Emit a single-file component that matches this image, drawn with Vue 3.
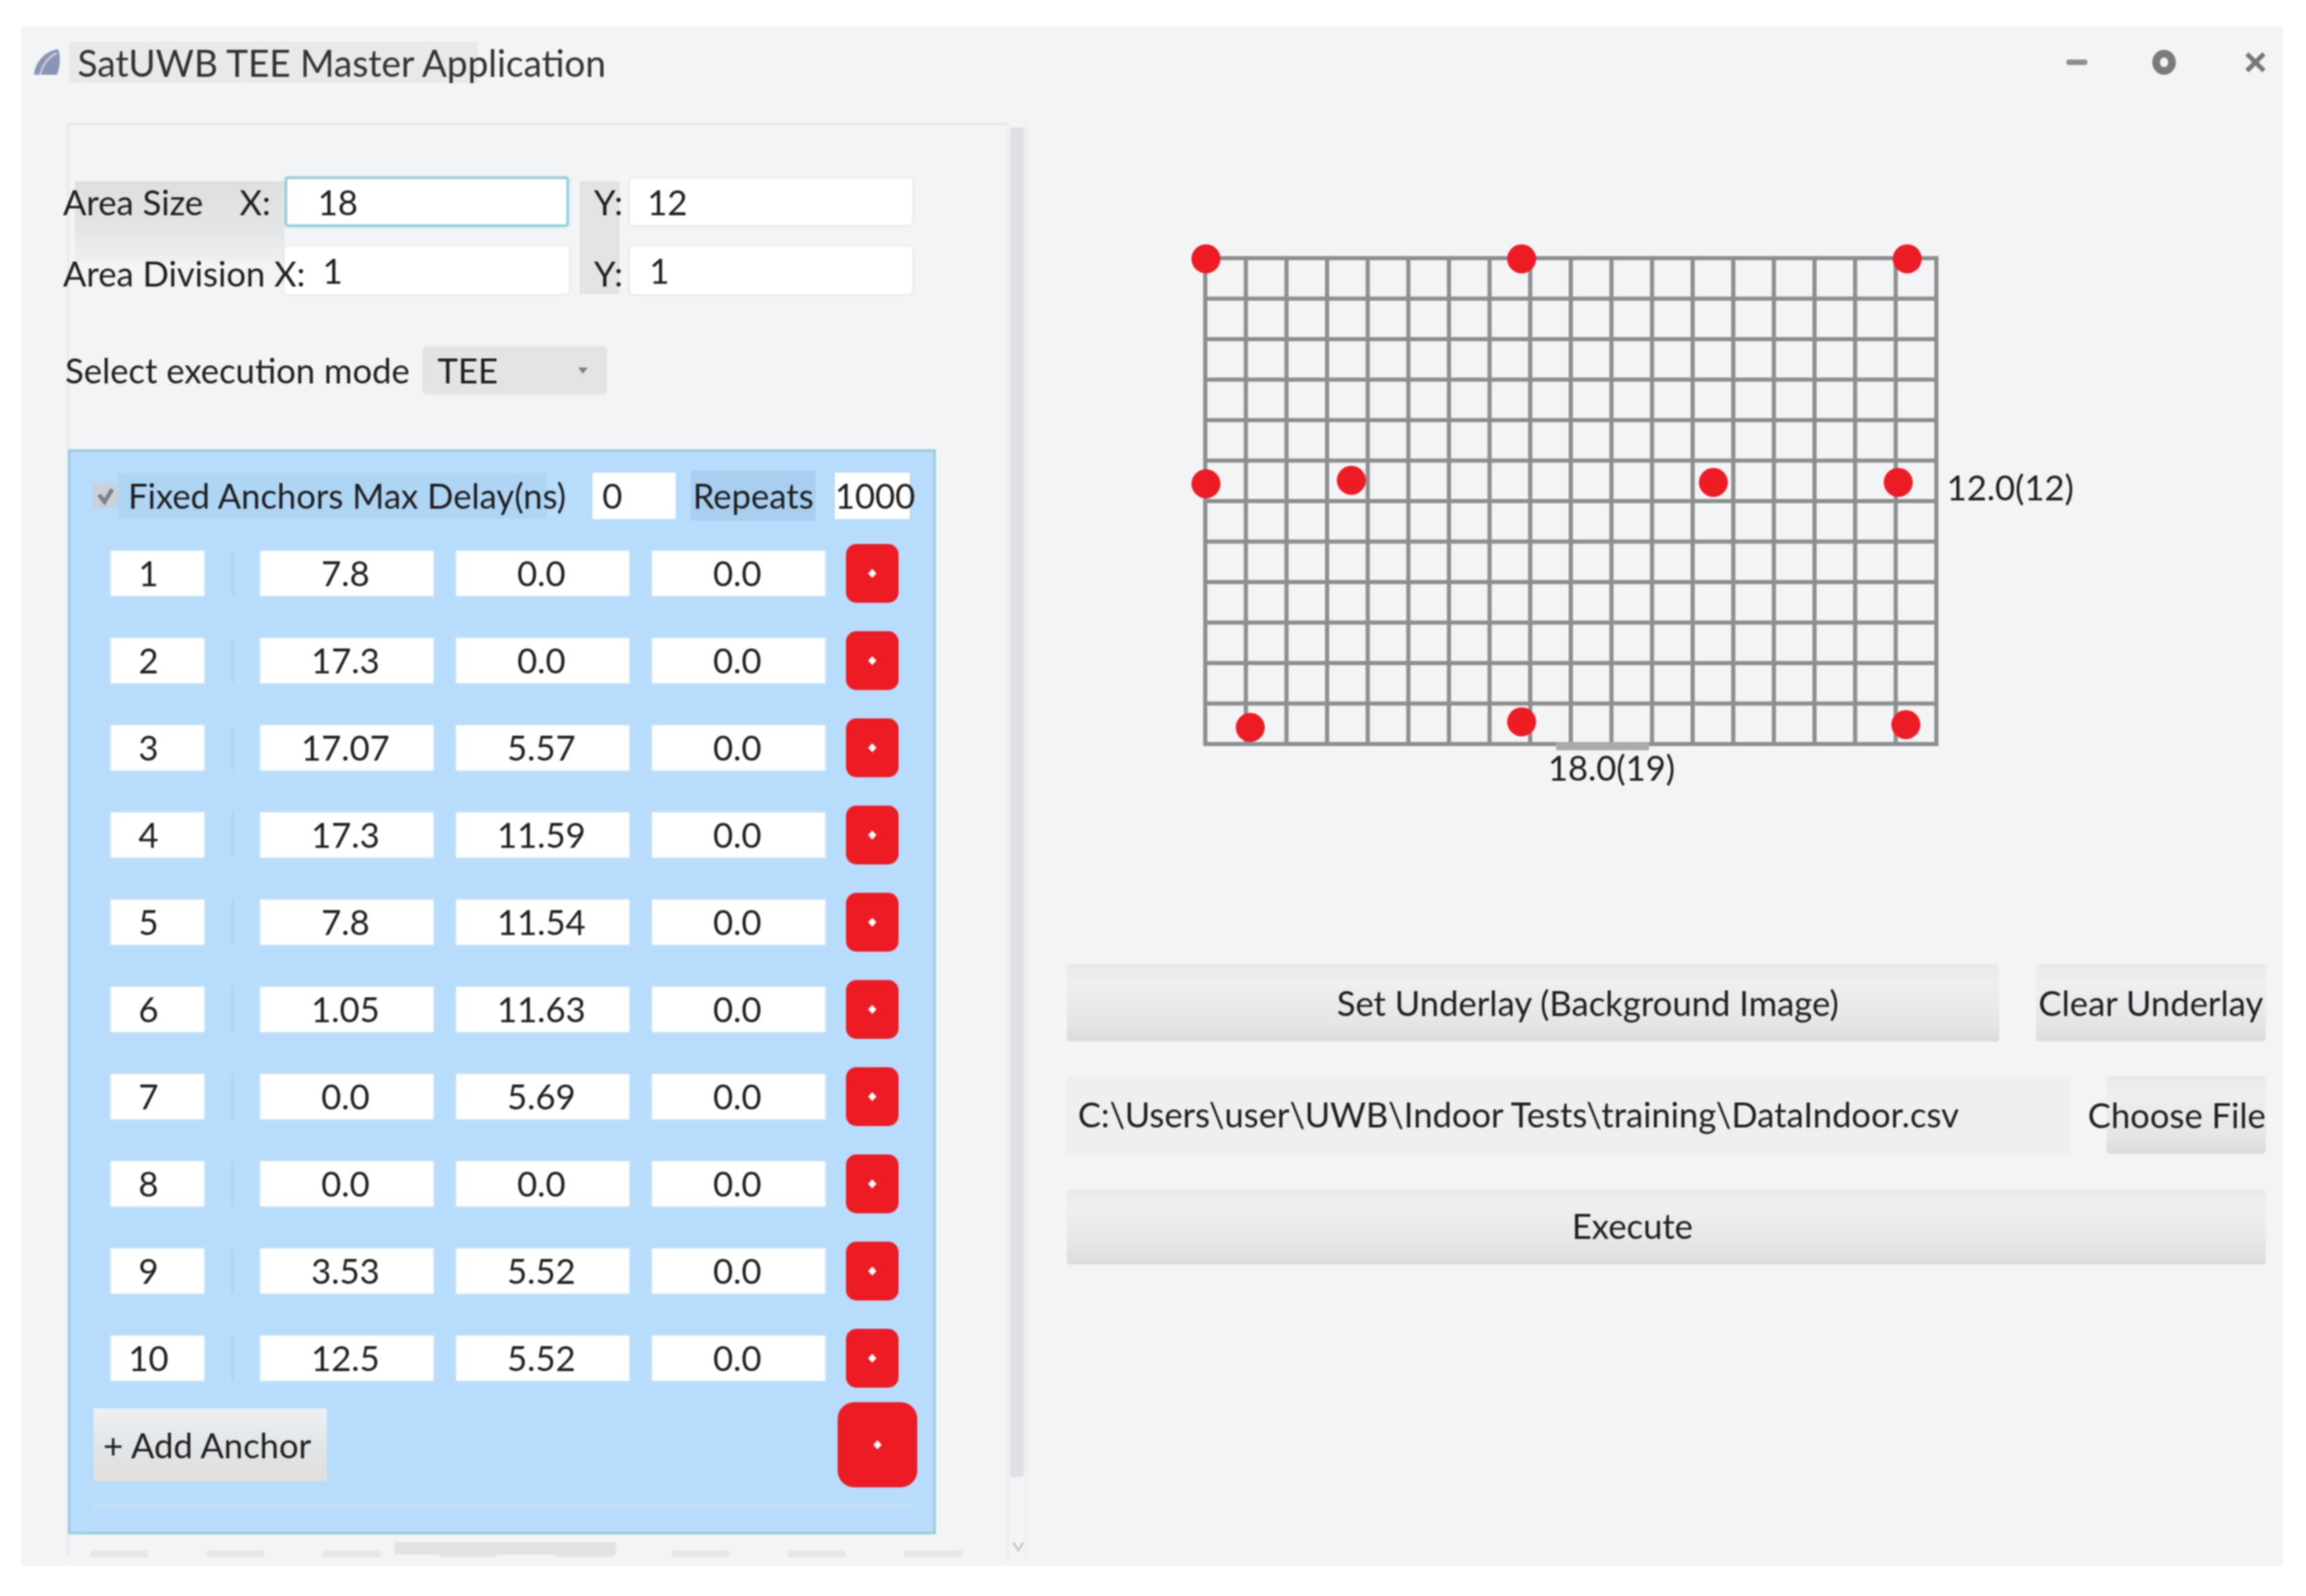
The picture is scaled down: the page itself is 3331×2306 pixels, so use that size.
<script setup>
const anchors = [
  { id: 1, x: '7.8', y: '0.0', z: '0.0' },
  { id: 2, x: '17.3', y: '0.0', z: '0.0' },
  { id: 3, x: '17.07', y: '5.57', z: '0.0' },
  { id: 4, x: '17.3', y: '11.59', z: '0.0' },
  { id: 5, x: '7.8', y: '11.54', z: '0.0' },
  { id: 6, x: '1.05', y: '11.63', z: '0.0' },
  { id: 7, x: '0.0', y: '5.69', z: '0.0' },
  { id: 8, x: '0.0', y: '0.0', z: '0.0' },
  { id: 9, x: '3.53', y: '5.52', z: '0.0' },
  { id: 10, x: '12.5', y: '5.52', z: '0.0' }
]

// plot geometry, in the local coordinates of the svg
const left = 200
const top = 195
const cell = 58.67
const rowH = 58.5
const cols = Array.from({ length: 19 }, (_, i) => left + i * cell)
const rows = Array.from({ length: 13 }, (_, i) => top + i * rowH)
const right = cols[18]
const bottom = rows[12]

const dots = [
  [201, 196], [657, 196], [1214, 196],
  [201, 521], [411, 516], [934, 519], [1201, 519],
  [265, 873], [657, 865], [1212, 869]
]
</script>

<template>
  <div class="window">
    <header class="titlebar">
      <svg class="app-icon" viewBox="0 0 40 40">
        <path d="M1 38C3 20 16 4 36 1c4 12 3 26-2 37z" fill="#8b94b4" />
        <path d="M10 38C13 24 22 12 34 7" stroke="#c9cedd" stroke-width="3" fill="none" />
      </svg>
      <span class="title">SatUWB TEE Master Application</span>
      <div class="controls">
        <span class="ctl-min"></span>
        <span class="ctl-max"></span>
        <svg class="ctl-close" viewBox="0 0 32 32">
          <path d="M3 3l26 26M29 3L3 29" stroke="#777" stroke-width="7" />
        </svg>
      </div>
    </header>

    <div class="content">
      <section class="left-panel">
        <div class="left-main">
          <div class="area-form">
            <div class="lbl lbl-size"><span>Area Size</span><span>X:</span></div>
            <div class="field field-focus">18</div>
            <div class="lbl lbl-y lbl-y1">Y:</div>
            <div class="field field-y1">12</div>
            <div class="lbl lbl-div">Area Division X:</div>
            <div class="field field-div">1</div>
            <div class="lbl lbl-y lbl-y2">Y:</div>
            <div class="field field-y2">1</div>
          </div>

          <div class="mode-row">
            <span class="mode-label">Select execution mode</span>
            <div class="combo">
              <span>TEE</span>
              <i class="combo-arrow"></i>
            </div>
          </div>

          <div class="anchors">
            <div class="anchors-head">
              <svg class="check" viewBox="0 0 36 36">
                <rect width="36" height="36" rx="5" fill="#c9d1d9" />
                <path d="M9 17l8 10 11-18" stroke="#7d7f85" stroke-width="6" fill="none" />
              </svg>
              <span class="head-label">Fixed Anchors Max Delay(ns)</span>
              <div class="delay">0</div>
              <span class="repeats-label">Repeats</span>
              <div class="repeats">1000</div>
            </div>

            <div class="anchor-list">
              <div v-for="a in anchors" :key="a.id" class="anchor-row">
                <div class="cell cell-id">{{ a.id }}</div>
                <div class="sep"></div>
                <div class="cell">{{ a.x }}</div>
                <div class="cell">{{ a.y }}</div>
                <div class="cell">{{ a.z }}</div>
                <button class="red-btn"></button>
              </div>
            </div>

            <div class="anchors-foot">
              <button class="add-btn">+ Add Anchor</button>
              <button class="red-btn red-big"></button>
            </div>
          </div>

          <div class="h-scroll"><span></span></div>
        </div>

        <div class="v-scroll">
          <div class="v-thumb"></div>
          <svg class="v-arrow" viewBox="0 0 20 20">
            <path d="M3 5l7 11 7-11" stroke="#c3c5c9" stroke-width="3" fill="none" />
          </svg>
        </div>
      </section>

      <section class="right">
        <svg class="plot" viewBox="0 0 1732 1215">
          <g stroke="#8d8e90" stroke-width="6">
            <line v-for="x in cols" :key="'c' + x" :x1="x" :x2="x" :y1="top" :y2="bottom" />
            <line v-for="y in rows" :key="'r' + y" :x1="left - 3" :x2="right + 3" :y1="y" :y2="y" />
          </g>
          <rect x="707" y="894" width="134" height="12" fill="#a9aaac" />
          <circle v-for="d in dots" :key="d[0] + '-' + d[1]" :cx="d[0]" :cy="d[1]" r="21" fill="#ed1c24" />
          <text class="plot-text" x="1271" y="545">12.0(12)</text>
          <text class="plot-text" x="695" y="950">18.0(19)</text>
        </svg>

        <div class="action-row action-underlay">
          <button class="btn btn-grow">Set Underlay (Background Image)</button>
          <button class="btn btn-clear">Clear Underlay</button>
        </div>
        <div class="action-row action-file">
          <div class="path">C:\Users\user\UWB\Indoor Tests\training\DataIndoor.csv</div>
          <button class="btn btn-file">Choose File</button>
        </div>
        <button class="btn btn-exec">Execute</button>
      </section>
    </div>
  </div>
</template>

<style>
html,
body {
  background: #ffffff;
}
</style>

<style scoped>
.window {
  box-sizing: border-box;
  width: 3268px;
  height: 2225px;
  margin: 38px 0 0 30px;
  background: #f3f4f6;
  color: #1f1f1f;
  font-family: Lato, "Noto Sans", sans-serif;
  font-size: 50px;
  filter: blur(0.9px);
}

/* title bar */
.titlebar {
  display: flex;
  align-items: center;
  height: 140px;
  padding: 0 25px 36px 18px;
  box-sizing: border-box;
}

.app-icon {
  width: 40px;
  height: 40px;
  flex: none;
}

.title {
  margin-left: 12px;
  padding: 0 12px;
  background: linear-gradient(90deg, #e9e9ea 590px, transparent 590px);
  font-size: 53.4px;
  line-height: 60px;
  color: #333;
  white-space: nowrap;
}

.controls {
  display: flex;
  align-items: center;
  margin-left: auto;
}

.ctl-min {
  width: 30px;
  height: 8px;
  margin-right: 94px;
  background: #8f8f8f;
  border-radius: 3px;
}

.ctl-max {
  box-sizing: border-box;
  width: 34px;
  height: 36px;
  margin-right: 100px;
  border: 11px solid #7b7b7b;
  border-radius: 50%;
}

.ctl-close {
  width: 30px;
  height: 30px;
}

.content {
  display: flex;
  gap: 58px;
  padding: 0 25px 0 67px;
}

/* left panel */
.left-panel {
  display: flex;
  width: 1386px;
  height: 2072px;
  flex: none;
}

.left-main {
  position: relative;
  width: 1358px;
  flex: none;
  border-top: 3px solid #e7e8ea;
  border-left: 3px solid #e7e8ea;
  padding-top: 74px;
  box-sizing: border-box;
}

.area-form {
  display: grid;
  grid-template-columns: 320px 411px 88px 408px;
  grid-template-rows: 73px 69px;
  row-gap: 28px;
  align-items: center;
  margin-left: -9px;
}

.lbl {
  position: relative;
  white-space: nowrap;
  line-height: 60px;
}

.lbl-size {
  display: flex;
  justify-content: space-between;
  padding-right: 20px;
}

/* grey smear behind the first label, runs down towards the second row */
.lbl-size::before {
  content: '';
  position: absolute;
  z-index: -1;
  left: 17px;
  right: 0;
  top: 0;
  bottom: -58px;
  background: linear-gradient(#dedfe0, #e4e5e6 60%, #f0f1f2);
}

.lbl-div {
  z-index: 1;
  padding-top: 8px;
}

.lbl-y {
  padding-left: 36px;
}

.lbl-y::before {
  content: '';
  position: absolute;
  z-index: -1;
  left: 15px;
  width: 58px;
  top: 0;
  bottom: 0;
  background: #e2e4e5;
}

.lbl-y1::before {
  bottom: -40px;
}

.lbl-y2 {
  padding-top: 8px;
}

.field {
  box-sizing: border-box;
  height: 100%;
  display: flex;
  align-items: center;
  background: #fff;
  border-radius: 5px;
  box-shadow: 0 0 4px 1px #e2e3e5;
}

.field-focus {
  padding-left: 44px;
  border: 4px solid #94d2dd;
}

.field-y1 {
  height: 67px;
  padding-left: 25px;
}

.field-y2 {
  padding-left: 28px;
}

.field-div {
  padding-left: 55px;
}

.mode-row {
  display: flex;
  align-items: center;
  height: 70px;
  margin: 75px 0 0 -6px;
}

.mode-label {
  width: 516px;
  white-space: nowrap;
}

.combo {
  display: flex;
  align-items: center;
  justify-content: space-between;
  box-sizing: border-box;
  width: 267px;
  height: 70px;
  padding: 0 28px 0 22px;
  background: #e3e4e5;
  border-radius: 6px;
}

.combo-arrow {
  width: 0;
  height: 0;
  border-left: 7px solid transparent;
  border-right: 7px solid transparent;
  border-top: 9px solid #808080;
}

/* anchors box */
.anchors {
  box-sizing: border-box;
  width: 1254px;
  height: 1568px;
  margin: 79px 0 0 -2px;
  padding: 27px 0 0;
  background: #b7dcfc;
  border: 4px solid #9ccfdc;
}

.anchors-head {
  display: flex;
  align-items: center;
  height: 72px;
  padding-left: 32px;
}

.check {
  width: 36px;
  height: 36px;
  flex: none;
}

.head-label {
  width: 686px;
  padding-left: 15px;
  box-sizing: border-box;
  line-height: 66px;
  background: linear-gradient(90deg, #afd5f5 620px, transparent 620px);
  white-space: nowrap;
}

.delay {
  box-sizing: border-box;
  width: 120px;
  height: 67px;
  padding-left: 14px;
  line-height: 67px;
  background: #fff;
}

.repeats-label {
  width: 180px;
  margin-left: 22px;
  line-height: 72px;
  text-align: center;
  background: #a8cff0;
}

.repeats {
  width: 108px;
  margin-left: 28px;
  line-height: 67px;
  text-align: center;
  background: #fff;
}

.anchor-list {
  display: flex;
  flex-direction: column;
  gap: 41px;
  margin-top: 34px;
  padding-left: 58px;
}

.anchor-row {
  display: flex;
  align-items: center;
  height: 85px;
}

.cell {
  box-sizing: border-box;
  width: 250px;
  height: 65px;
  margin-right: 33px;
  padding-right: 4px;
  line-height: 65px;
  text-align: center;
  background: #fff;
  box-shadow: 0 0 4px 1px #d3e7f7;
}

.cell-id {
  width: 135px;
  margin-right: 0;
  padding-right: 26px;
}

.sep {
  width: 4px;
  height: 65px;
  margin: 0 38px 0 39px;
  background: #aed5f5;
}

.red-btn {
  display: flex;
  align-items: center;
  justify-content: center;
  width: 76px;
  height: 85px;
  padding: 0;
  border: none;
  background: #ed1c24;
  border-radius: 15px;
}

.red-btn::after {
  content: '';
  width: 12px;
  height: 13px;
  background: #fff;
  clip-path: polygon(50% 0, 100% 50%, 50% 100%, 0 50%);
}

.anchor-row .red-btn {
  margin-left: -3px;
}

.anchors-foot {
  position: relative;
  display: flex;
  align-items: center;
  justify-content: space-between;
  margin-top: 21px;
  padding: 0 23px 0 33px;
  height: 123px;
}

.anchors-foot::after {
  content: '';
  position: absolute;
  left: 30px;
  right: 30px;
  bottom: -32px;
  height: 8px;
  background: #bfdff9;
}

.add-btn {
  width: 337px;
  height: 105px;
  padding: 0 0 0 14px;
  border: none;
  text-align: left;
  font: inherit;
  color: inherit;
  white-space: nowrap;
  background: linear-gradient(#edf1f4, #e1e4e7 60%, #e2dedb);
}

.red-big {
  width: 115px;
  height: 123px;
  border-radius: 24px;
}

.h-scroll {
  position: absolute;
  left: 30px;
  right: 30px;
  bottom: 0;
  height: 10px;
  background: repeating-linear-gradient(90deg, #e6e7e9 0 84px, transparent 84px 168px);
}

.h-scroll span {
  position: absolute;
  left: 440px;
  bottom: 4px;
  width: 320px;
  height: 18px;
  background: #e1e2e4;
}

.v-scroll {
  position: relative;
  flex: 1;
  border-left: 2px solid #e9eaec;
  border-right: 2px solid #e9eaec;
}

.v-thumb {
  height: 1950px;
  margin: 6px 2px 0;
  background: #dfe0e3;
  border-radius: 4px;
}

.v-arrow {
  position: absolute;
  left: 4px;
  bottom: 6px;
  width: 20px;
  height: 20px;
}

/* right side */
.right {
  display: flex;
  flex-direction: column;
  width: 1732px;
  flex: none;
}

.plot {
  display: block;
  width: 1732px;
  height: 1215px;
}

.plot-text {
  font-family: Lato, "Noto Sans", sans-serif;
  font-size: 50px;
  fill: #1f1f1f;
}

.action-row {
  display: flex;
  justify-content: space-between;
}

.action-underlay {
  height: 112px;
}

.action-file {
  height: 112px;
  margin-top: 50px;
}

.btn {
  border: none;
  padding: 0;
  font: inherit;
  color: inherit;
  white-space: nowrap;
  background: linear-gradient(#e8e9eb, #eeeff0 25%, #e5e6e8 75%, #dadbdd);
  border-radius: 5px;
}

.btn-grow {
  width: 1347px;
  padding-left: 158px;
}

.btn-clear {
  width: 332px;
}

.path {
  box-sizing: border-box;
  width: 1449px;
  padding-left: 16px;
  line-height: 110px;
  background: #eeeff0;
  white-space: nowrap;
  font-size: 49.9px;
}

.btn-file {
  display: flex;
  align-items: center;
  justify-content: flex-end;
  width: 230px;
}

.btn-exec {
  width: 1732px;
  height: 109px;
  margin-top: 51px;
  padding: 0 98px 3px 0;
}
</style>
